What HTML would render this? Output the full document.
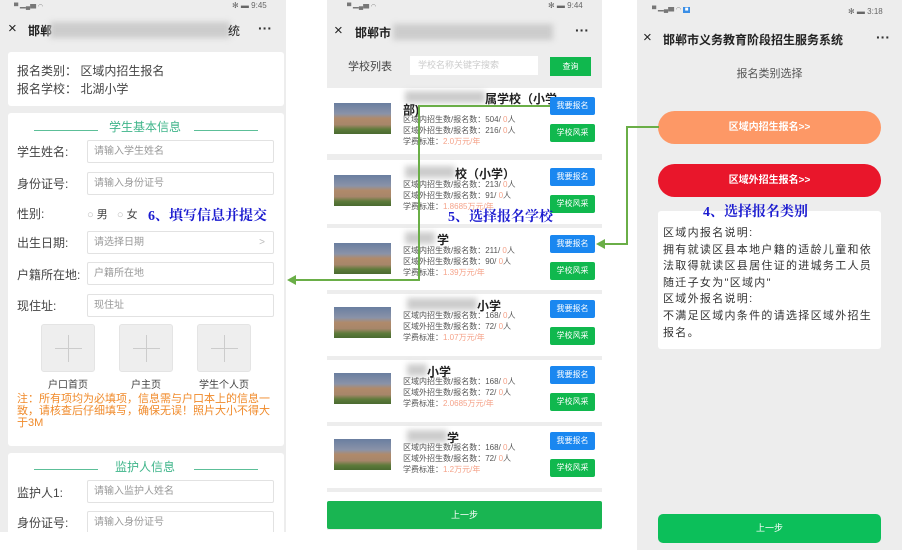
<!DOCTYPE html>
<html><head><meta charset="utf-8"><style>
*{margin:0;padding:0;box-sizing:border-box}
body{width:902px;height:550px;background:#fff;position:relative;overflow:hidden;font-family:"Liberation Sans","Noto Sans CJK SC",sans-serif;color:#333}
.a{position:absolute}
.ph{position:absolute;background:#ededed;overflow:hidden}
.card{position:absolute;background:#fff;border-radius:3px}
.lbl{position:absolute;font-size:12px;color:#444}
.inp{position:absolute;background:#fff;border:1px solid #e2e2e2;border-radius:2px;font-size:10px;color:#999;padding:5px 0 0 6px;line-height:12px}
.hdr{position:absolute;font-size:12px;color:#3fb58a;text-align:center}
.hl{position:absolute;height:1px;background:#5cbf98}
.up{position:absolute;width:54px;height:48px;background:#eee;border:1px solid #e4e4e4;border-radius:3px}
.up:before{content:"";position:absolute;left:13px;top:23px;width:27px;height:1px;background:#ccc}
.up:after{content:"";position:absolute;left:26px;top:10px;width:1px;height:27px;background:#ccc}
.upl{position:absolute;font-size:10px;color:#444;text-align:center;width:70px}
.item{position:absolute;left:327px;width:275px;background:#fff}
.img{position:absolute;left:7px;width:57px;height:31px;background:linear-gradient(#6a7ea0 0,#8a93a8 35%,#b08a6a 50%,#a7866a 70%,#5d7a3a 85%,#4a6a30 100%)}
.tt{position:absolute;left:76px;font-size:12px;font-weight:bold;color:#222;white-space:nowrap}
.dt{position:absolute;left:76px;font-size:8px;color:#555;line-height:11px;white-space:nowrap}
.dt b{font-weight:normal;color:#f5a38a}
.bb{position:absolute;left:223px;width:45px;height:18px;background:#1a87f0;color:#fff;font-size:8px;text-align:center;line-height:18px;border-radius:2px}
.gb{position:absolute;left:223px;width:45px;height:18px;background:#10b84e;color:#fff;font-size:8px;text-align:center;line-height:18px;border-radius:2px}
.blur{position:absolute;background:#ccc;filter:blur(3px)}
.ann{position:absolute;color:#1b1bd0;font-weight:bold;font-size:14px;font-family:"Liberation Serif","Noto Serif CJK SC",serif}
.gl{position:absolute;background:#6aae47}
</style></head><body>

<div class="ph" style="left:0;top:0;width:286px;height:532px">
 <div class="a" style="left:14px;top:1px;font-size:6px;color:#777">▀ ▂▄▆ ◠ </div>
 <div class="a" style="left:232px;top:1px;font-size:8px;color:#666">✻ ▬ 9:45</div>
 <div class="a" style="left:8px;top:20px;font-size:15px;color:#222">×</div>
 <div class="a" style="left:28px;top:22px;font-size:12px;font-weight:bold;color:#222">邯郸</div>
 <div class="blur" style="left:50px;top:22px;width:180px;height:16px"></div>
 <div class="a" style="left:228px;top:22px;font-size:12px;color:#222">统</div>
 <div class="a" style="left:258px;top:20px;font-size:14px;font-weight:bold;color:#333">···</div>
 <div class="card" style="left:8px;top:52px;width:276px;height:54px"></div>
 <div class="a" style="left:17px;top:62px;font-size:12px;color:#444;line-height:18px">报名类别：&nbsp;区域内招生报名<br>报名学校：&nbsp;北湖小学</div>
 <div class="card" style="left:8px;top:113px;width:276px;height:333px"></div>
 <div class="hl" style="left:34px;top:130px;width:64px"></div>
 <div class="hdr" style="left:100px;top:118px;width:90px">学生基本信息</div>
 <div class="hl" style="left:194px;top:130px;width:64px"></div>
 <div class="lbl" style="left:17px;top:143px">学生姓名:</div><div class="inp" style="left:87px;top:140px;width:187px;height:23px">请输入学生姓名</div>
 <div class="lbl" style="left:17px;top:175px">身份证号:</div><div class="inp" style="left:87px;top:172px;width:187px;height:23px">请输入身份证号</div>
 <div class="lbl" style="left:17px;top:205px">性别:</div>
 <div class="a" style="left:87px;top:206px;font-size:11px;color:#444"><span style="color:#bbb">○</span> 男 &nbsp;&nbsp;<span style="color:#bbb">○</span> 女</div>
 <div class="lbl" style="left:17px;top:234px">出生日期:</div><div class="inp" style="left:87px;top:231px;width:187px;height:23px">请选择日期<span style="position:absolute;right:8px;color:#bbb">&gt;</span></div>
 <div class="lbl" style="left:17px;top:266px">户籍所在地:</div><div class="inp" style="left:87px;top:262px;width:187px;height:23px">户籍所在地</div>
 <div class="lbl" style="left:17px;top:297px">现住址:</div><div class="inp" style="left:87px;top:294px;width:187px;height:23px">现住址</div>
 <div class="up" style="left:41px;top:324px"></div><div class="up" style="left:119px;top:324px"></div><div class="up" style="left:197px;top:324px"></div>
 <div class="upl" style="left:33px;top:376px">户口首页</div><div class="upl" style="left:111px;top:376px">户主页</div><div class="upl" style="left:189px;top:376px">学生个人页</div>
 <div class="a" style="left:17px;top:393px;width:262px;font-size:11px;line-height:12px;color:#f08a2a">注：所有项均为必填项，信息需与户口本上的信息一致，请核查后仔细填写，确保无误！照片大小不得大于3M</div>
 <div class="card" style="left:8px;top:453px;width:276px;height:90px"></div>
 <div class="hl" style="left:34px;top:469px;width:64px"></div>
 <div class="hdr" style="left:100px;top:458px;width:90px">监护人信息</div>
 <div class="hl" style="left:194px;top:469px;width:64px"></div>
 <div class="lbl" style="left:17px;top:484px">监护人1:</div><div class="inp" style="left:87px;top:480px;width:187px;height:23px">请输入监护人姓名</div>
 <div class="lbl" style="left:17px;top:514px">身份证号:</div><div class="inp" style="left:87px;top:511px;width:187px;height:23px">请输入身份证号</div>
</div>

<div class="ph" style="left:327px;top:0;width:275px;height:530px"></div>
<div class="a" style="left:347px;top:1px;font-size:6px;color:#777">▀ ▂▄▆ ◠</div>
<div class="a" style="left:548px;top:1px;font-size:8px;color:#666">✻ ▬ 9:44</div>
<div class="a" style="left:334px;top:22px;font-size:15px;color:#222">×</div>
<div class="a" style="left:355px;top:24px;font-size:12px;font-weight:bold;color:#222">邯郸市</div>
<div class="blur" style="left:393px;top:24px;width:160px;height:16px"></div>
<div class="a" style="left:575px;top:22px;font-size:14px;font-weight:bold;color:#333">···</div>
<div class="a" style="left:348px;top:58px;font-size:11px;color:#444">学校列表</div>
<div class="a" style="left:410px;top:56px;width:128px;height:19px;background:#fff;font-size:9px;color:#ccc;padding-left:8px;line-height:19px">学校名称关键字搜索</div>
<div class="a" style="left:550px;top:57px;width:41px;height:19px;background:#10b84e;color:#fff;font-size:8px;text-align:center;line-height:19px">查询</div>

<div class="item" style="top:88px;height:66px">
 <div class="img" style="top:15px"></div>
 <div class="blur" style="left:78px;top:3px;width:80px;height:12px"></div>
 <div class="tt" style="top:2px;left:158px">属学校（小学</div><div class="tt" style="top:13px">部)</div>
 <div class="dt" style="top:26px">区域内招生数/报名数：504/ <b>0</b>人<br>区域外招生数/报名数：216/ <b>0</b>人<br>学费标准：<b>2.0万元/年</b></div>
 <div class="bb" style="top:9px">我要报名</div><div class="gb" style="top:36px">学校风采</div>
</div>
<div class="item" style="top:160px;height:64px">
 <div class="img" style="top:15px"></div>
 <div class="blur" style="left:78px;top:6px;width:50px;height:12px"></div>
 <div class="tt" style="top:5px;left:128px">校（小学）</div>
 <div class="dt" style="top:19px">区域内招生数/报名数：213/ <b>0</b>人<br>区域外招生数/报名数：91/ <b>0</b>人<br>学费标准：<b>1.8685万元/年</b></div>
 <div class="bb" style="top:8px">我要报名</div><div class="gb" style="top:35px">学校风采</div>
</div>
<div class="item" style="top:228px;height:62px">
 <div class="img" style="top:15px"></div>
 <div class="blur" style="left:78px;top:4px;width:30px;height:12px"></div>
 <div class="tt" style="top:3px;left:110px">学</div>
 <div class="dt" style="top:17px">区域内招生数/报名数：211/ <b>0</b>人<br>区域外招生数/报名数：90/ <b>0</b>人<br>学费标准：<b>1.39万元/年</b></div>
 <div class="bb" style="top:7px">我要报名</div><div class="gb" style="top:34px">学校风采</div>
</div>
<div class="item" style="top:294px;height:62px">
 <div class="img" style="top:13px"></div>
 <div class="blur" style="left:80px;top:4px;width:70px;height:12px"></div>
 <div class="tt" style="top:3px;left:150px">小学</div>
 <div class="dt" style="top:16px">区域内招生数/报名数：168/ <b>0</b>人<br>区域外招生数/报名数：72/ <b>0</b>人<br>学费标准：<b>1.07万元/年</b></div>
 <div class="bb" style="top:6px">我要报名</div><div class="gb" style="top:33px">学校风采</div>
</div>
<div class="item" style="top:360px;height:62px">
 <div class="img" style="top:13px"></div>
 <div class="blur" style="left:80px;top:4px;width:20px;height:12px"></div>
 <div class="tt" style="top:3px;left:100px">小学</div>
 <div class="dt" style="top:16px">区域内招生数/报名数：168/ <b>0</b>人<br>区域外招生数/报名数：72/ <b>0</b>人<br>学费标准：<b>2.0685万元/年</b></div>
 <div class="bb" style="top:6px">我要报名</div><div class="gb" style="top:33px">学校风采</div>
</div>
<div class="item" style="top:426px;height:62px">
 <div class="img" style="top:13px"></div>
 <div class="blur" style="left:80px;top:4px;width:40px;height:12px"></div>
 <div class="tt" style="top:3px;left:120px">学</div>
 <div class="dt" style="top:16px">区域内招生数/报名数：168/ <b>0</b>人<br>区域外招生数/报名数：72/ <b>0</b>人<br>学费标准：<b>1.2万元/年</b></div>
 <div class="bb" style="top:6px">我要报名</div><div class="gb" style="top:33px">学校风采</div>
</div>
<div class="item" style="top:492px;height:12px"></div>
<div class="a" style="left:327px;top:501px;width:275px;height:28px;background:#19b552;color:#fff;font-size:9px;text-align:center;line-height:28px;border-radius:2px">上一步</div>

<div class="ph" style="left:637px;top:0;width:265px;height:550px"></div>
<div class="a" style="left:652px;top:4px;font-size:6px;color:#777">▀ ▂▄▆ ◠ <span style="background:#3a8ee6;color:#fff;padding:0 2px">■</span></div>
<div class="a" style="left:848px;top:7px;font-size:8px;color:#666">✻ ▬ 3:18</div>
<div class="a" style="left:643px;top:29px;font-size:15px;color:#222">×</div>
<div class="a" style="left:663px;top:31px;font-size:12px;font-weight:bold;color:#222">邯郸市义务教育阶段招生服务系统</div>
<div class="a" style="left:876px;top:29px;font-size:14px;font-weight:bold;color:#333">···</div>
<div class="a" style="left:637px;top:65px;width:265px;text-align:center;font-size:11px;color:#555">报名类别选择</div>
<div class="a" style="left:658px;top:111px;width:223px;height:33px;border-radius:17px;background:#fd9866;color:#fff;font-size:10px;font-weight:bold;text-align:center;line-height:33px">区域内招生报名&gt;&gt;</div>
<div class="a" style="left:658px;top:164px;width:223px;height:33px;border-radius:17px;background:#e9162b;color:#fff;font-size:10px;font-weight:bold;text-align:center;line-height:33px">区域外招生报名&gt;&gt;</div>
<div class="a" style="left:658px;top:211px;width:223px;height:138px;background:#fff;border-radius:3px"></div>
<div class="a" style="left:663px;top:225px;width:215px;font-size:11px;line-height:16.6px;letter-spacing:1.3px;color:#333">区域内报名说明:<br>拥有就读区县本地户籍的适龄儿童和依法取得就读区县居住证的进城务工人员随迁子女为"区域内"<br>区域外报名说明:<br>不满足区域内条件的请选择区域外招生报名。</div>
<div class="a" style="left:658px;top:514px;width:223px;height:29px;border-radius:5px;background:#0cbf5a;color:#fff;font-size:9px;text-align:center;line-height:29px">上一步</div>

<div class="ann" style="left:148px;top:205px">6、填写信息并提交</div>
<div class="ann" style="left:448px;top:206px">5、选择报名学校</div>
<div class="ann" style="left:703px;top:201px">4、选择报名类别</div>

<div class="gl" style="left:419px;top:105px;width:131px;height:2px"></div>
<div class="gl" style="left:418px;top:105px;width:2px;height:176px"></div>
<div class="gl" style="left:295px;top:279px;width:125px;height:2px"></div>
<div class="a" style="left:287px;top:275px;width:0;height:0;border-top:5px solid transparent;border-bottom:5px solid transparent;border-right:9px solid #6aae47"></div>

<div class="gl" style="left:627px;top:126px;width:32px;height:2px"></div>
<div class="gl" style="left:626px;top:126px;width:2px;height:119px"></div>
<div class="gl" style="left:604px;top:243px;width:24px;height:2px"></div>
<div class="a" style="left:596px;top:239px;width:0;height:0;border-top:5px solid transparent;border-bottom:5px solid transparent;border-right:9px solid #6aae47"></div>
</body></html>
